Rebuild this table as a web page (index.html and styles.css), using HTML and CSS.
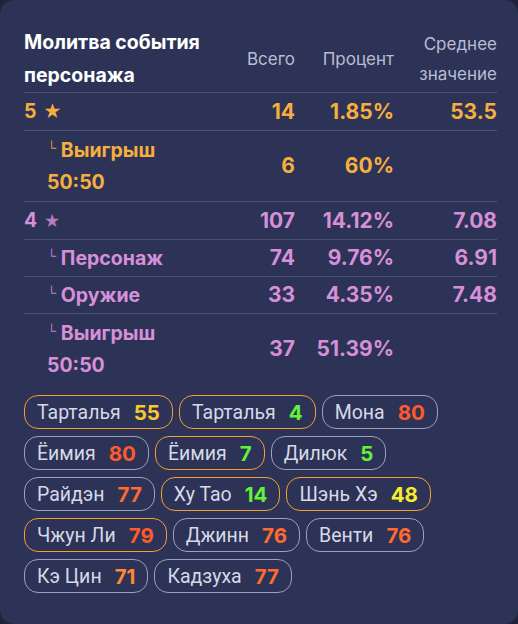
FILE: index.html
```html
<!DOCTYPE html>
<html lang="ru">
<head>
<meta charset="utf-8">
<link rel="stylesheet" href="styles.css">
</head>
<body>
<div class="card">
  <div class="table">
    <div class="row head">
      <div class="title">Молитва события персонажа</div>
      <div class="th">Всего</div>
      <div class="th">Процент</div>
      <div class="th">Среднее значение</div>
    </div>
    <div class="row gold">
      <div class="label">5 <span class="star">★</span></div>
      <div class="num">14</div>
      <div class="num">1.85%</div>
      <div class="num">53.5</div>
    </div>
    <div class="row gold tall">
      <div class="label sub"><span class="tree">└</span> Выигрыш 50:50</div>
      <div class="num">6</div>
      <div class="num">60%</div>
      <div class="num"></div>
    </div>
    <div class="row purple">
      <div class="label">4 <span class="star small">★</span></div>
      <div class="num">107</div>
      <div class="num">14.12%</div>
      <div class="num">7.08</div>
    </div>
    <div class="row purple">
      <div class="label sub"><span class="tree">└</span> Персонаж</div>
      <div class="num">74</div>
      <div class="num">9.76%</div>
      <div class="num">6.91</div>
    </div>
    <div class="row purple">
      <div class="label sub"><span class="tree">└</span> Оружие</div>
      <div class="num">33</div>
      <div class="num">4.35%</div>
      <div class="num">7.48</div>
    </div>
    <div class="row purple tall last">
      <div class="label sub"><span class="tree">└</span> Выигрыш 50:50</div>
      <div class="num">37</div>
      <div class="num">51.39%</div>
      <div class="num"></div>
    </div>
  </div>
  <div class="chips">
    <div class="chip up">Тарталья <b class="c-gold">55</b></div>
    <div class="chip up">Тарталья <b class="c-green">4</b></div>
    <div class="chip">Мона <b class="c-red">80</b></div>
    <div class="chip">Ёимия <b class="c-red">80</b></div>
    <div class="chip up">Ёимия <b class="c-green">7</b></div>
    <div class="chip">Дилюк <b class="c-green">5</b></div>
    <div class="chip">Райдэн <b class="c-orange">77</b></div>
    <div class="chip up">Ху Тао <b class="c-green">14</b></div>
    <div class="chip up">Шэнь Хэ <b class="c-yellow">48</b></div>
    <div class="chip up">Чжун Ли <b class="c-red">79</b></div>
    <div class="chip">Джинн <b class="c-orange">76</b></div>
    <div class="chip">Венти <b class="c-orange">76</b></div>
    <div class="chip">Кэ Цин <b class="c-amber">71</b></div>
    <div class="chip">Кадзуха <b class="c-orange">77</b></div>
  </div>
</div>
</body>
</html>
```
FILE: styles.css
```css
html, body {
  margin: 0;
  padding: 0;
  background: #1f2238;
}
body {
  font-family: Inter, "Noto Sans", sans-serif;
  width: 518px;
  height: 624px;
  overflow: hidden;
}
.card {
  box-sizing: border-box;
  width: 518px;
  height: 624px;
  background: #2d3257;
  border-radius: 14px;
  padding: 26px 21px 0 24px;
}
.table {
  display: flex;
  flex-direction: column;
}
.row {
  display: grid;
  grid-template-columns: 180px 1fr 99px 103px;
  align-items: center;
  padding: 2px 0;
  border-top: 1px solid #4c5373;
  font-size: 19.5px;
  font-weight: 700;
  line-height: 32px;
}
.row.head {
  border-top: none;
  padding: 0;
}
.row.tall {
  padding: 3px 0;
}
.row.last {
  padding-bottom: 5px;
}
.title {
  color: #ffffff;
  font-size: 19.5px;
  font-weight: 700;
  line-height: 33px;
}
.th {
  text-align: right;
  color: #b9bdd2;
  font-size: 17px;
  font-weight: 400;
  line-height: 30px;
}
.num {
  text-align: right;
  font-size: 21px;
}
.gold { color: #f6ae3d; }
.purple { color: #d690d8; }
.sub {
  padding-left: 23px;
}
.tree {
  font-size: 13px;
  font-weight: 400;
  line-height: 0;
  vertical-align: 5px;
  opacity: 0.85;
}
.star {
  font-size: 18px;
  margin-left: 2px;
}
.star.small {
  font-size: 16px;
  color: #b47ec0;
}
.chips {
  margin-top: 9px;
  display: flex;
  flex-wrap: wrap;
  gap: 7px 6px;
}
.chip {
  box-sizing: border-box;
  height: 34px;
  display: flex;
  align-items: center;
  gap: 13px;
  padding: 0 12px;
  border: 1px solid #9ca2bd;
  border-radius: 14px;
  color: #d6d9e6;
  font-family: Roboto, Inter, sans-serif;
  font-size: 19.5px;
  font-weight: 400;
}
.chip.up {
  border-color: #f0a12e;
}
.chip b {
  font-family: Inter, sans-serif;
  font-weight: 700;
  font-size: 20.5px;
}
.c-gold { color: #f6c931; }
.c-yellow { color: #f6ee2b; }
.c-green { color: #62f23a; }
.c-red { color: #ff5a2b; }
.c-orange { color: #ff6a30; }
.c-amber { color: #ff8a2f; }
```
